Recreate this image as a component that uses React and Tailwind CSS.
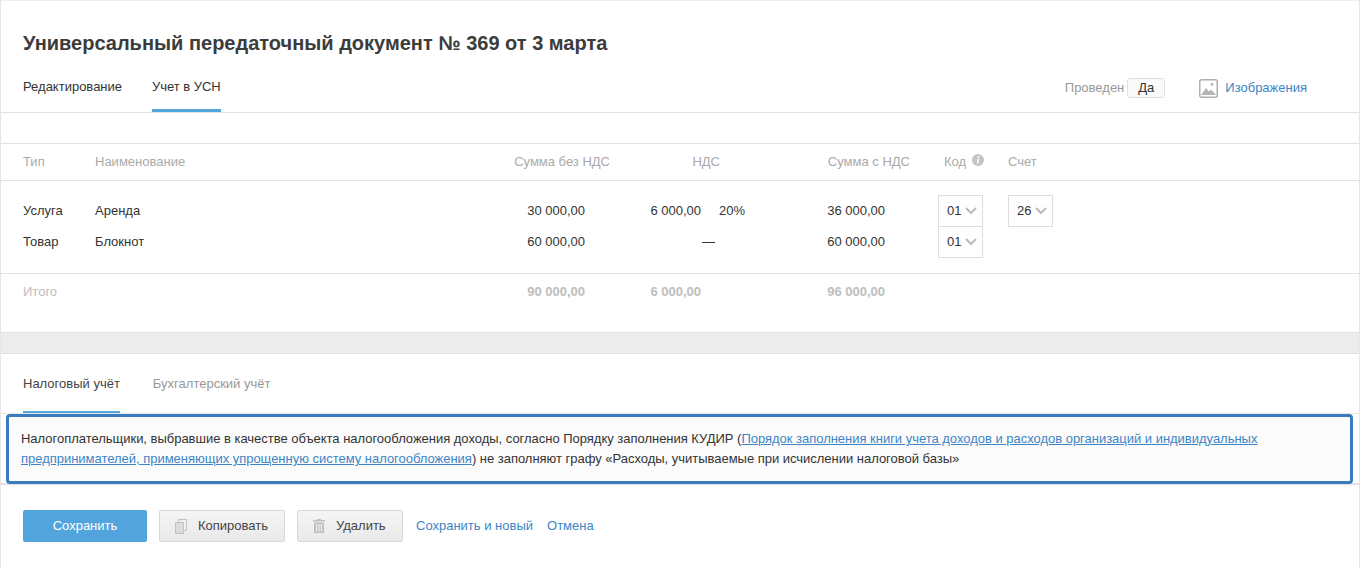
import React from "react";

function Sel({ v }) {
  return (
    <div className="w-[45px] h-[32px] border border-[#dddddd] bg-white flex items-center pl-[8px] gap-[4px] text-[13px] text-[#333]">
      <span>{v}</span>
      <svg width="12" height="8" viewBox="0 0 12 8" fill="none" stroke="#bbbbbb" strokeWidth="2">
        <path d="M1 1l5 5 5-5" />
      </svg>
    </div>
  );
}

function CopyIcon() {
  return (
    <svg width="12" height="15" viewBox="0 0 12 15" fill="none" stroke="#c2c2c2" strokeWidth="1">
      <rect x="3.5" y="0.5" width="8" height="11" fill="#f0f0f0" />
      <rect x="0.5" y="3.5" width="8" height="11" fill="#dcdcdc" />
    </svg>
  );
}

function TrashIcon() {
  return (
    <svg width="12" height="14" viewBox="0 0 12 14" fill="#c0c0c0">
      <rect x="4" y="0" width="4" height="1" />
      <rect x="0" y="1" width="12" height="1.5" />
      <path d="M1 3.5h10V14H1z M3 5v7.5h1.2V5z M5.4 5v7.5h1.2V5z M7.8 5v7.5H9V5z" fillRule="evenodd" />
    </svg>
  );
}

export default function App() {
  return (
    <div
      className="w-[1361px] h-[568px] overflow-hidden bg-white text-[13px] text-[#333] flex flex-col"
      style={{ fontFamily: '"Liberation Sans", Arial, sans-serif' }}
    >
      <div className="w-[1360px] border-x border-[#e6e6e6] flex flex-col h-full border-t border-t-[#eceff1]">
        {/* Head */}
        <div className="h-[112px] border-b border-[#e2e2e2] pl-[22px] flex flex-col shrink-0">
          <h1 className="mt-[31px] text-[20px] leading-[23px] font-bold text-[#3c3c3c]">
            Универсальный передаточный документ № 369 от 3 марта
          </h1>
          <div className="flex justify-between mt-[9px] h-[49px]">
            <div className="flex gap-[30px] h-full">
              <div className="pt-[13px] text-[#333]">Редактирование</div>
              <div className="pt-[13px] h-full border-b-[3px] border-[#52a5dc] text-[#333] tracking-[-0.03px]">Учет в УСН</div>
            </div>
            <div className="flex items-center h-[32px] mt-[8px] mr-[52px]">
              <span className="text-[#999999] mr-[3px]">Проведен</span>
              <span className="w-[38px] h-[20px] border border-[#e0e0e0] rounded-[3px] bg-[#fafafa] flex items-center justify-center text-[#333] text-[13px]">
                Да
              </span>
              <svg className="ml-[34px] mr-[7px]" width="19" height="19" viewBox="0 0 19 19">
                <rect x="0.75" y="0.75" width="17.5" height="17.5" rx="2" fill="#fff" stroke="#b0b0b0" strokeWidth="1.5" />
                <path d="M2 16l5-7 3 3.5 2-2 5 5.5z" fill="#b5b5b5" />
                <circle cx="13" cy="5.5" r="1.4" fill="#b5b5b5" />
              </svg>
              <span className="text-[#3d85c6] whitespace-nowrap">Изображения</span>
            </div>
          </div>
        </div>

        {/* Table */}
        <div className="h-[30px] shrink-0" />
        <div className="h-[38px] shrink-0 border-y border-[#e2e2e2] flex items-center pl-[22px] text-[#aaaaaa] whitespace-nowrap">
          <div className="w-[72px]">Тип</div>
          <div className="w-[320px]">Наименование</div>
          <div className="w-[195px] text-right">Сумма без НДС</div>
          <div className="w-[110px] text-right">НДС</div>
          <div className="w-[190px] text-right">Сумма с НДС</div>
          <div className="ml-[34px] flex items-center gap-[6px] w-[64px]">
            <span>Код</span>
            <svg className="-mt-[4px]" width="12" height="12" viewBox="0 0 12 12">
              <circle cx="6" cy="6" r="6" fill="#c4c4c4" />
              <path d="M5.4 5h1.8l-.7 4.6H4.8z" fill="#fff" />
              <rect x="5.6" y="2.4" width="1.9" height="1.6" fill="#fff" />
            </svg>
          </div>
          <div>Счет</div>
        </div>

        <div className="h-[93px] shrink-0 border-b border-[#e2e2e2] pt-[14px] pl-[22px] flex flex-col">
          <div className="flex items-start h-[31px]">
            <div className="w-[72px] h-[32px] flex items-center">Услуга</div>
            <div className="w-[395px] h-[32px] flex items-center">Аренда</div>
            <div className="w-[95px] h-[32px] flex items-center justify-end">30 000,00</div>
            <div className="w-[116px] h-[32px] flex items-center justify-end">6 000,00</div>
            <div className="w-[44px] h-[32px] flex items-center justify-end">20%</div>
            <div className="w-[140px] h-[32px] flex items-center justify-end">36 000,00</div>
            <div className="ml-[53px]"><Sel v="01" /></div>
            <div className="ml-[25px]"><Sel v="26" /></div>
          </div>
          <div className="flex items-start h-[31px]">
            <div className="w-[72px] h-[32px] flex items-center">Товар</div>
            <div className="w-[395px] h-[32px] flex items-center">Блокнот</div>
            <div className="w-[95px] h-[32px] flex items-center justify-end">60 000,00</div>
            <div className="w-[130px] h-[32px] flex items-center justify-end">—</div>
            <div className="w-[170px] h-[32px] flex items-center justify-end">60 000,00</div>
            <div className="ml-[53px]"><Sel v="01" /></div>
          </div>
        </div>

        <div className="h-[58px] shrink-0 flex items-start pt-[8px] pl-[22px] font-bold text-[#bdbdbd]">
          <div className="w-[72px] font-normal">Итого</div>
          <div className="w-[395px]" />
          <div className="w-[95px] text-right">90 000,00</div>
          <div className="w-[116px] text-right">6 000,00</div>
          <div className="w-[184px] text-right">96 000,00</div>
        </div>

        {/* Band */}
        <div className="h-[22px] shrink-0 bg-[#ececec] border-y border-[#e2e2e2]" />

        {/* Tabs */}
        <div className="h-[60px] shrink-0 pl-[22px] flex gap-[33px] border-b border-[#e6e6e6]">
          <div className="h-[59px] pt-[20px] border-b-[2px] border-[#52a5dc] text-[#444]">Налоговый учёт</div>
          <div className="pt-[20px] text-[#999999]">Бухгалтерский учёт</div>
        </div>

        {/* Alert */}
        <div className="h-[71px] shrink-0 border-b-[2px] border-[#e2e2e2]">
          <div className="ml-[5px] w-[1347px] h-[70px] border-[3px] border-[#3a7bbf] rounded-[4px] bg-[#fbfbfb] pl-[12px] pt-[12px] leading-[20px] text-[#333] text-[13px] tracking-[-0.02px]">
            Налогоплательщики, выбравшие в качестве объекта налогообложения доходы, согласно Порядку заполнения КУДИР (
            <a className="text-[#3d85c6] underline">
              Порядок заполнения книги учета доходов и расходов организаций и индивидуальных
              <br />
              предпринимателей, применяющих упрощенную систему налогообложения
            </a>
            ) не заполняют графу «Расходы, учитываемые при исчислении налоговой базы»
          </div>
        </div>

        {/* Footer */}
        <div className="flex items-center pl-[22px] pt-[25px] text-[13px]">
          <button className="w-[124px] h-[32px] rounded-[2px] bg-[#52a5dc] text-white">Сохранить</button>
          <button className="ml-[12px] w-[126px] h-[32px] rounded-[2px] border border-[#d8d8d8] bg-linear-to-b from-[#f5f5f5] to-[#e9e9e9] flex items-center pl-[15px] gap-[11px] text-[#444]">
            <CopyIcon />
            Копировать
          </button>
          <button className="ml-[12px] w-[106px] h-[32px] rounded-[2px] border border-[#d8d8d8] bg-linear-to-b from-[#f5f5f5] to-[#e9e9e9] flex items-center pl-[15px] gap-[11px] text-[#444]">
            <TrashIcon />
            Удалить
          </button>
          <a className="ml-[13px] text-[#3d85c6]">Сохранить и новый</a>
          <a className="ml-[14px] text-[#3d85c6]">Отмена</a>
        </div>
      </div>
    </div>
  );
}
